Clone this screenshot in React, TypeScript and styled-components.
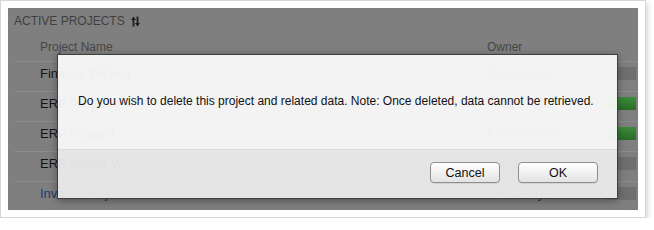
import React from "react";
import styled, { createGlobalStyle } from "styled-components";

const GlobalStyle = createGlobalStyle`
  html, body { margin: 0; padding: 0; background: #ffffff; }
  body { font-family: "Liberation Sans", Arial, Helvetica, sans-serif; }
  * { box-sizing: border-box; }
`;

const Frame = styled.div`
  width: 646px;
  height: 218px;
  background: #ffffff;
  border: 1px solid #d6d6d6;
  padding: 7px;
  box-shadow: 1px 3px 6px rgba(0, 0, 0, 0.2);
`;

const Viewport = styled.div`
  position: relative;
  width: 630px;
  height: 202px;
  overflow: hidden;
  background: #7f7f7f;
`;

const Title = styled.div`
  display: flex;
  align-items: center;
  gap: 6px;
  padding: 5px 6px 0;
  height: 21px;
  font-size: 12px;
  line-height: 16px;
  color: #3f3f3f;
  text-transform: uppercase;
`;

const Table = styled.div`
  margin-top: 10px;
  padding-left: 6px;
`;

const Grid = styled.div<{ $head?: boolean }>`
  display: grid;
  grid-template-columns: 26px 447px 90px 25px 34px;
  align-items: center;
  ${(p) =>
    p.$head
      ? `height: 22px; padding-bottom: 6px; font-size: 12px; line-height: 16px; color: #474747;`
      : `height: 30px; border-top: 1px solid #8c8c8c; padding-bottom: 5px; font-size: 13px; line-height: 16px; color: #141414;`}
`;

const Name = styled.span<{ $link?: boolean }>`
  grid-column: 2;
  color: ${(p) => (p.$link ? "#1d3a6c" : "inherit")};
`;

const Owner = styled.span<{ $head?: boolean }>`
  grid-column: 3;
  color: ${(p) => (p.$head ? "#474747" : "#3a3a3a")};
`;

const Num = styled.span`
  grid-column: 4;
  text-align: right;
  padding-right: 3px;
  color: #6a6a6a;
  font-size: 12px;
`;

const Bar = styled.span<{ $green?: boolean }>`
  grid-column: 5;
  margin-left: 4px;
  height: 13px;
  margin-top: -1px;
  background: ${(p) =>
    p.$green ? "linear-gradient(#3c8c3a, #2a6c29)" : "#6f6f6f"};
`;

const Modal = styled.div`
  position: absolute;
  left: 49px;
  top: 46px;
  width: 561px;
  height: 145px;
  display: flex;
  flex-direction: column;
  border: 1px solid #3e3e3e;
  box-shadow: 0 2px 8px rgba(0, 0, 0, 0.35);
`;

const ModalBody = styled.div`
  flex: 1;
  display: flex;
  align-items: center;
  padding: 0 20px 2px;
  background: rgba(250, 250, 250, 0.95);
  font-size: 12px;
  white-space: nowrap;
  color: #111;
`;

const ModalFooter = styled.div`
  height: 49px;
  display: flex;
  justify-content: flex-end;
  align-items: flex-start;
  gap: 18px;
  padding: 12px 19px 0;
  border-top: 1px solid #d9d9d9;
  background: rgba(235, 235, 235, 0.95);
`;

const Button = styled.button<{ $w: number }>`
  width: ${(p) => p.$w}px;
  height: 21px;
  padding: 0;
  border: 1px solid #8f8f8f;
  border-radius: 4px;
  background: linear-gradient(#ffffff, #f1f1f1 50%, #e3e3e3);
  box-shadow: 0 1px 1px rgba(0, 0, 0, 0.08);
  font-family: "Liberation Sans", Arial, Helvetica, sans-serif;
  font-size: 12.5px;
  line-height: 18px;
  color: #111;
`;

const SortIcon = () => (
  <svg width="9" height="11" viewBox="0 0 9 11" fill="#1e1e1e">
    <rect x="1.6" y="2.5" width="1.8" height="8" />
    <polygon points="0,4 2.5,0.5 5,4" />
    <rect x="5.6" y="0.5" width="1.8" height="7.5" />
    <polygon points="4,7 6.5,10.5 9,7" />
  </svg>
);

const rows = [
  { name: "Finance Project", owner: "Tricia Boyle", num: "0", green: false },
  { name: "ERP Program", owner: "Tricia Boyle", num: "4", green: true },
  { name: "ERP Phase I", owner: "Einhard Klein", num: "41", green: true },
  { name: "ERP Phase V", owner: "Tricia Boyle", num: "0", green: false },
  { name: "Invoice Project", owner: "Tricia Boyle", num: "0", green: false, link: true },
];

export default function App() {
  return (
    <>
      <GlobalStyle />
      <Frame>
        <Viewport>
          <Title>
            Active Projects
            <SortIcon />
          </Title>
          <Table>
            <Grid $head>
              <Name>Project Name</Name>
              <Owner $head>Owner</Owner>
            </Grid>
            {rows.map((r) => (
              <Grid key={r.name}>
                <Name $link={r.link}>{r.name}</Name>
                <Owner>{r.owner}</Owner>
                <Num>{r.num}</Num>
                <Bar $green={r.green} />
              </Grid>
            ))}
          </Table>
          <Modal>
            <ModalBody>
              Do you wish to delete this project and related data. Note: Once deleted, data cannot be retrieved.
            </ModalBody>
            <ModalFooter>
              <Button $w={70}>Cancel</Button>
              <Button $w={80}>OK</Button>
            </ModalFooter>
          </Modal>
        </Viewport>
      </Frame>
    </>
  );
}
